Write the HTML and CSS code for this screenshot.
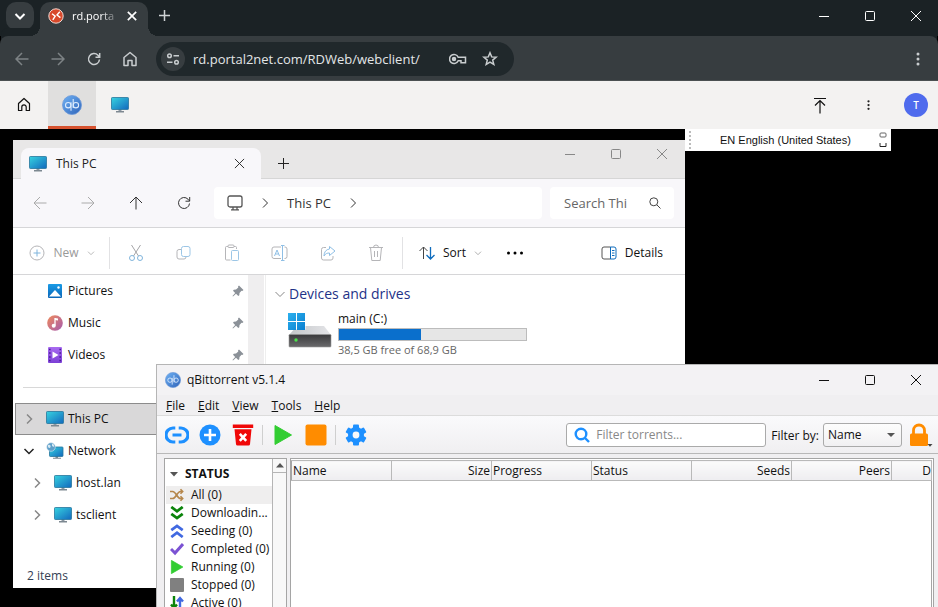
FILE: index.html
```html
<!DOCTYPE html>
<html lang="en">
<head>
<meta charset="utf-8">
<title>rd.portal2net.com</title>
<meta name="viewport" content="width=device-width, initial-scale=1">
<link rel="stylesheet" href="styles.css">
</head>
<body>
<svg class="defs" aria-hidden="true">
  <defs>
    <linearGradient id="g-screen" x1="0" y1="0" x2="1" y2="1"><stop offset="0" stop-color="#37d3e0"/><stop offset="1" stop-color="#1268bd"/></linearGradient>
    <linearGradient id="g-qb" x1="0" y1="0" x2="1" y2="1"><stop offset="0" stop-color="#6fb2f5"/><stop offset="1" stop-color="#2f63b8"/></linearGradient>
    <linearGradient id="g-music" x1="0" y1="0" x2="1" y2="1"><stop offset="0" stop-color="#f08a5a"/><stop offset="1" stop-color="#a55bb0"/></linearGradient>
    <linearGradient id="g-video" x1="0" y1="0" x2="0" y2="1"><stop offset="0" stop-color="#a86bf0"/><stop offset="1" stop-color="#7c3fd6"/></linearGradient>
    <linearGradient id="g-pic" x1="0" y1="0" x2="0" y2="1"><stop offset="0" stop-color="#1a9be6"/><stop offset="1" stop-color="#0b66b8"/></linearGradient>
    <linearGradient id="g-win" x1="0" y1="0" x2="1" y2="1"><stop offset="0" stop-color="#2bb0ee"/><stop offset="1" stop-color="#0a7fd0"/></linearGradient>
    <linearGradient id="g-drive" x1="0" y1="0" x2="0" y2="1"><stop offset="0" stop-color="#3a3a3c"/><stop offset="1" stop-color="#6a6a6c"/></linearGradient>
    <linearGradient id="g-top" x1="0" y1="0" x2="1" y2="0"><stop offset="0" stop-color="#c4c6c9"/><stop offset="1" stop-color="#e4e5e8"/></linearGradient>
  </defs>
  <symbol id="pc" viewBox="0 0 18 16"><path d="M7.500 12h3v2.500h-3z" fill="#8d99a3"/><path d="M5 14h8v1.500H5z" fill="#7d8891"/><rect x="0.500" y="0.500" width="17" height="12" rx="0.800" fill="url(#g-screen)" stroke="#27769c" stroke-width="0.800"/></symbol>
  <symbol id="qb" viewBox="0 0 20 20"><circle cx="10" cy="10" r="9.500" fill="url(#g-qb)" stroke="#6a97d8" stroke-width="0.800"/><g fill="none" stroke="#dcebfd" stroke-width="1.100"><circle cx="6.200" cy="10.200" r="2.700"/><path d="M9 7.300v8.500"/></g><g fill="none" stroke="#dcebfd" stroke-width="1.100"><path d="M11.200 4v9"/><circle cx="13.900" cy="10.200" r="2.700"/></g></symbol>
  <symbol id="close" viewBox="0 0 12 12"><path d="M1 1l10 10M11 1L1 11" fill="none" stroke="currentColor"/></symbol>
  <symbol id="max" viewBox="0 0 12 12"><rect x="1.500" y="1.500" width="9" height="9" rx="1" fill="none" stroke="currentColor"/></symbol>
  <symbol id="min" viewBox="0 0 12 12"><path d="M1 6.500h10" fill="none" stroke="currentColor"/></symbol>
  <symbol id="plus" viewBox="0 0 12 12"><path d="M0 5.500h11M5.500 0v11" fill="none" stroke="currentColor"/></symbol>
  <symbol id="left" viewBox="0 0 14 14"><path d="M13.500 7H1M7 1L1 7l6 6" fill="none" stroke="currentColor"/></symbol>
  <symbol id="right" viewBox="0 0 14 14"><path d="M.5 7H13M7 1l6 6-6 6" fill="none" stroke="currentColor"/></symbol>
  <symbol id="up" viewBox="0 0 14 14"><path d="M7 13.500V1M1 7l6-6 6 6" fill="none" stroke="currentColor"/></symbol>
  <symbol id="chev" viewBox="0 0 12 12"><path d="M4 1.500L8.500 6 4 10.500" fill="none" stroke="currentColor"/></symbol>
  <symbol id="chevd" viewBox="0 0 12 12"><path d="M1.500 4L6 8.500 10.500 4" fill="none" stroke="currentColor"/></symbol>
  <symbol id="home" viewBox="0 0 14 16"><path d="M1 6.500L7 1.500l6 5V14.500H9V9.500H5v5H1z" fill="none" stroke="currentColor" stroke-linejoin="round"/></symbol>
  <symbol id="reload" viewBox="0 0 14 14"><path d="M12.500 7.500A5.500 5.500 0 1 1 11 3.200L12.700 5M12.700 1v4.200H8.500" fill="none" stroke="currentColor"/></symbol>
  <symbol id="dots" viewBox="0 0 4 16"><circle cx="2" cy="3" r="1.500" fill="currentColor"/><circle cx="2" cy="8" r="1.500" fill="currentColor"/><circle cx="2" cy="13" r="1.500" fill="currentColor"/></symbol>
  <symbol id="pin" viewBox="0 0 12 12"><path d="M7 .5L11.500 5 10.300 6 9.500 5.700 7.500 8l-.2 2.300-1 .8L4 8.800 1 11.500.5 11l2.700-3L1 5.800l.8-1L4 4.600 6.300 2.500 6 1.500z" fill="#8b9198"/></symbol>
  <symbol id="play" viewBox="0 0 18 20"><path d="M1 0.500L17.500 10 1 19.500z" fill="#32cd32" stroke="#32cd32" stroke-linejoin="round"/></symbol>
</svg>

<header class="tabstrip">
  <button class="tabsearch" aria-label="Search tabs"><svg width="12" height="12" class="s2"><use href="#chevd"/></svg></button>
  <div class="tab">
    <svg width="16" height="16" viewBox="0 0 16 16"><circle cx="8" cy="8" r="7.200" fill="#d8492b" stroke="#f3d9d2" stroke-width="1"/><path d="M4 5.800l3.200 2.400-2.400 3.600M11.800 3.800L9 7l3.400 2.600" fill="none" stroke="#fff" stroke-width="1.400"/></svg>
    <span class="tabname">rd.porta</span>
    <button aria-label="Close tab"><svg width="10" height="10" class="s2"><use href="#close"/></svg></button>
  </div>
  <button class="newtab" aria-label="New tab"><svg width="12" height="12" class="s15"><use href="#plus"/></svg></button>
  <div class="wincontrols">
    <button aria-label="Minimize"><svg width="12" height="12"><use href="#min"/></svg></button>
    <button aria-label="Maximize"><svg width="12" height="12"><use href="#max"/></svg></button>
    <button aria-label="Close"><svg width="12" height="12"><use href="#close"/></svg></button>
  </div>
</header>

<nav class="toolbar">
  <button class="dim" aria-label="Back"><svg width="14" height="14" class="s15"><use href="#left"/></svg></button>
  <button class="dim" aria-label="Forward"><svg width="14" height="14" class="s15"><use href="#right"/></svg></button>
  <button aria-label="Reload"><svg width="14" height="14" class="s15"><use href="#reload"/></svg></button>
  <button aria-label="Home"><svg width="14" height="16" class="s15"><use href="#home"/></svg></button>
  <div class="omnibox">
    <button class="siteinfo" aria-label="Site information"><svg width="14" height="12" viewBox="0 0 14 12" fill="none" stroke="currentColor" stroke-width="1.500"><circle cx="3.500" cy="2.800" r="1.800"/><path d="M7.500 2.800H13M1 9.200h5.500"/><circle cx="10.500" cy="9.200" r="1.800"/></svg></button>
    <input class="url" aria-label="Address" value="rd.portal2net.com/RDWeb/webclient/">
    <button aria-label="Passwords"><svg width="18" height="12" viewBox="0 0 18 12" fill="none" stroke="currentColor" stroke-width="1.500"><path d="M9.200 4.200A4.500 4.500 0 1 0 9.200 7.800H12v2h4.500V4.200z"/><circle cx="5" cy="6" r="1.500" fill="currentColor"/></svg></button>
    <button aria-label="Bookmark"><svg width="16" height="16" viewBox="0 0 16 16" fill="none" stroke="currentColor" stroke-width="1.500"><path d="M8 1.800l1.700 4.100 4.400.3-3.400 2.900 1.100 4.300L8 11.100l-3.800 2.300 1.100-4.300L1.900 6.200l4.400-.3z"/></svg></button>
  </div>
  <button class="menu" aria-label="Menu"><svg width="4" height="16"><use href="#dots"/></svg></button>
</nav>

<nav class="appbar">
  <button aria-label="All resources"><svg width="14" height="16" viewBox="0 0 14 16"><path d="M1.500 6.500L7 1.500l5.500 5V13.500H9.200V10a2.200 2.200 0 0 0-4.400 0v3.500H1.500z" fill="none" stroke="#111" stroke-width="1.200" stroke-linejoin="round"/></svg></button>
  <button class="current" aria-label="qBittorrent"><svg width="20" height="20"><use href="#qb"/></svg></button>
  <button aria-label="This PC"><svg width="18" height="16"><use href="#pc"/></svg></button>
  <span class="grow"></span>
  <button aria-label="Upload"><svg width="14" height="18" viewBox="0 0 14 18"><path d="M1 2.500h12M7 17.500V4.500M2 9.500l5-5 5 5" fill="none" stroke="#111" stroke-width="1.200"/></svg></button>
  <button aria-label="More"><svg width="3" height="12" class="dark"><use href="#dots"/></svg></button>
  <button class="account"><span>T</span></button>
</nav>

<main class="desktop">
  <section class="langbar">
    <span class="grip"></span><span class="lang">EN English (United States)</span>
    <svg width="8" height="18" viewBox="0 0 8 18" fill="none"><rect x="1" y="2" width="6" height="4" rx="1" stroke="#666"/><path d="M1 12v3.500h6V12" stroke="#222"/></svg>
  </section>

  <section class="explorer">
    <div class="ex-title">
      <div class="ex-tab"><svg width="18" height="16"><use href="#pc"/></svg><span>This PC</span><button aria-label="Close tab"><svg width="11" height="11"><use href="#close"/></svg></button></div>
      <button class="ex-new" aria-label="New tab"><svg width="12" height="12"><use href="#plus"/></svg></button>
      <div class="wincontrols">
        <button aria-label="Minimize"><svg width="12" height="12"><use href="#min"/></svg></button>
        <button aria-label="Maximize"><svg width="12" height="12"><use href="#max"/></svg></button>
        <button aria-label="Close"><svg width="12" height="12"><use href="#close"/></svg></button>
      </div>
    </div>
    <div class="ex-nav">
      <button class="dim" aria-label="Back"><svg width="14" height="14"><use href="#left"/></svg></button>
      <button class="dim" aria-label="Forward"><svg width="14" height="14"><use href="#right"/></svg></button>
      <button aria-label="Up"><svg width="14" height="14"><use href="#up"/></svg></button>
      <button aria-label="Refresh"><svg width="14" height="14"><use href="#reload"/></svg></button>
      <div class="crumbs">
        <svg width="16" height="16" viewBox="0 0 16 16" fill="none" stroke="#555" stroke-width="1.300"><rect x="1" y="1" width="14" height="11" rx="2"/><path d="M6 12v2.500M10 12v2.500M4 14.800h8"/></svg>
        <svg width="12" height="12"><use href="#chev"/></svg>
        <a href="#">This PC</a>
        <svg width="12" height="12"><use href="#chev"/></svg>
      </div>
      <label class="ex-search"><input aria-label="Search This PC" placeholder="Search Thi"><svg width="12" height="12" viewBox="0 0 12 12" fill="none" stroke="#444"><circle cx="4.800" cy="4.800" r="4"/><path d="M7.800 7.800L11.500 11.500"/></svg></label>
    </div>
    <div class="ex-cmd">
      <button class="new" disabled><svg width="16" height="16" viewBox="0 0 16 16" fill="none"><circle cx="8" cy="8" r="7" stroke="#b5b5b8"/><path d="M4.500 8h7M8 4.500v7" stroke="#7fb4dc"/></svg>New<svg width="8" height="8"><use href="#chevd"/></svg></button>
      <span class="rule"></span>
      <button class="tool" aria-label="Cut"><svg width="16" height="18" viewBox="0 0 16 18" fill="none"><path d="M3.500 1l7 11M12.500 1l-7 11" stroke="#a5a5a8"/><circle cx="4" cy="14" r="2.500" stroke="#7fb4dc"/><circle cx="12" cy="14" r="2.500" stroke="#7fb4dc"/></svg></button>
      <button class="tool" aria-label="Copy"><svg width="16" height="16" viewBox="0 0 16 16" fill="none"><path d="M5 4.500H3a2 2 0 0 0-2 2V12a2 2 0 0 0 2 2h5a2 2 0 0 0 2-2" stroke="#b5b5b8"/><rect x="5.500" y="1.500" width="8.500" height="10" rx="2" stroke="#9cc6e6"/></svg></button>
      <button class="tool" aria-label="Paste"><svg width="16" height="18" viewBox="0 0 16 18" fill="none"><path d="M4 2.500H2.500a1 1 0 0 0-1 1V15a1 1 0 0 0 1 1h4M10 2.500h1.500a1 1 0 0 1 1 1V5" stroke="#b5b5b8"/><rect x="4" y="1" width="6" height="2.500" rx="1" stroke="#b5b5b8"/><rect x="7.500" y="6.500" width="7" height="10" rx="1" stroke="#9cc6e6"/></svg></button>
      <button class="tool" aria-label="Rename"><svg width="18" height="16" viewBox="0 0 18 16" fill="none"><path d="M10 2H3a2 2 0 0 0-2 2v7.500a2 2 0 0 0 2 2h7M13.500 2H14a2 2 0 0 1 2 2v7.500a2 2 0 0 1-2 2h-.5" stroke="#b5b5b8"/><path d="M3.500 11L6 5l2.500 6M4.500 9h3M11.500.5v15M10 .5h3.500M10 15.500h3.500" stroke="#8fbfe5"/></svg></button>
      <button class="tool" aria-label="Share"><svg width="16" height="16" viewBox="0 0 16 16" fill="none"><path d="M6 2.500H3.500a2 2 0 0 0-2 2V13a2 2 0 0 0 2 2H11a2 2 0 0 0 2-2v-2" stroke="#b5b5b8"/><path d="M9.500 1.500L15 6l-5.500 4.500V8C7 8 5.500 8.500 4 11c0-4 2-6.500 5.500-7z" stroke="#8fbfe5" stroke-linejoin="round"/></svg></button>
      <button class="tool" aria-label="Delete"><svg width="16" height="18" viewBox="0 0 16 18" fill="none" stroke="#b5b5b8"><path d="M1 3.500h14M5.500 3.500a2.500 2.500 0 0 1 5 0M2.500 3.500L3.800 16.500h8.400L13.500 3.500M6.500 7v6M9.500 7v6"/></svg></button>
      <span class="rule"></span>
      <button class="sort"><svg width="16" height="14" viewBox="0 0 16 14" fill="none"><path d="M4.500 13V1M.5 5l4-4 4 4" stroke="#444"/><path d="M11.500 1v12M7.500 9l4 4 4-4" stroke="#0f6cbd" stroke-width="1.300"/></svg>Sort<svg width="8" height="8"><use href="#chevd"/></svg></button>
      <button class="more" aria-label="See more"><svg width="18" height="4" viewBox="0 0 18 4"><circle cx="2.500" cy="2" r="1.500"/><circle cx="9" cy="2" r="1.500"/><circle cx="15.500" cy="2" r="1.500"/></svg></button>
      <span class="grow"></span>
      <button class="details"><svg width="16" height="14" viewBox="0 0 16 14" fill="none"><path d="M9.500 1H3a2 2 0 0 0-2 2v8a2 2 0 0 0 2 2h6.500" stroke="#555"/><path d="M9.500 1H13a2 2 0 0 1 2 2v8a2 2 0 0 1-2 2H9.500zM11 4.500h2.500M11 7h2.500M11 9.500h2.500" stroke="#0f6cbd"/></svg>Details</button>
    </div>
    <div class="ex-body">
      <div class="tree">
        <a href="#" class="quick"><svg width="16" height="16" viewBox="0 0 16 16"><rect x="1" y="1" width="14" height="14" rx="1" fill="url(#g-pic)"/><path d="M2 13.500L8 7l6 6.500z" fill="#fff"/><circle cx="11.500" cy="4.500" r="1.200" fill="#fff"/></svg>Pictures<svg width="12" height="12" class="pin"><use href="#pin"/></svg></a>
        <a href="#" class="quick"><svg width="16" height="16" viewBox="0 0 16 16"><circle cx="8" cy="8" r="7.800" fill="url(#g-music)"/><path d="M8 3v7.500" stroke="#fff" stroke-width="1.300"/><path d="M8 3l3 .6v2L8 5z" fill="#fff"/><circle cx="6.700" cy="10.700" r="2" fill="#fff"/></svg>Music<svg width="12" height="12" class="pin"><use href="#pin"/></svg></a>
        <a href="#" class="quick"><svg width="16" height="16" viewBox="0 0 16 16"><rect x="1" width="14" height="16" rx="1" fill="url(#g-video)"/><path d="M5.500 4.500L11.500 8l-6 3.500z" fill="#fff"/><path d="M2 2.500h1.600M2 6h1.600M2 10h1.600M2 13.500h1.600M12.400 2.500H14M12.400 6H14M12.400 10H14M12.400 13.500H14" stroke="#4a1d96" stroke-width="1.600"/></svg>Videos<svg width="12" height="12" class="pin"><use href="#pin"/></svg></a>
        <hr>
        <a href="#" class="sel"><svg width="12" height="12" class="arrow"><use href="#chev"/></svg><svg width="18" height="16"><use href="#pc"/></svg>This PC</a>
        <a href="#"><svg width="12" height="12" class="arrow open"><use href="#chevd"/></svg><svg width="18" height="18" viewBox="0 0 18 18"><path d="M9.500 14h2.500v2H9.500zM7 15.800h8v1H7z" fill="#7d8891"/><rect x="3.500" y="5" width="13.500" height="9.500" rx="0.800" fill="url(#g-screen)" stroke="#27769c" stroke-width="0.800"/><circle cx="5" cy="5" r="4.300" fill="#5f9fc9" stroke="#dbe9f2" stroke-width="0.600"/><path d="M2 3c2-1 3 .5 2.500 2S2.800 6 2 5zM6 1.500c2 .5 2.500 2 2 3.500L6 4z" fill="#d5e8f2"/></svg>Network</a>
        <a href="#" class="child"><svg width="12" height="12" class="arrow"><use href="#chev"/></svg><svg width="18" height="16"><use href="#pc"/></svg>host.lan</a>
        <a href="#" class="child"><svg width="12" height="12" class="arrow"><use href="#chev"/></svg><svg width="18" height="16"><use href="#pc"/></svg>tsclient</a>
        <p class="count">2 items</p>
      </div>
      <div class="track"></div>
      <div class="files">
        <h2><svg width="12" height="12"><use href="#chevd"/></svg>Devices and drives</h2>
        <div class="drive">
          <svg width="44" height="38" viewBox="0 0 44 38"><path d="M9 14h27l7 9H1z" fill="url(#g-top)"/><rect x="1" y="22.500" width="42" height="12.500" rx="0.800" fill="url(#g-drive)" stroke="#999" stroke-width="0.600"/><circle cx="8" cy="28" r="1.700" fill="#4be34b"/><path d="M0 0h17.500v17.500H0z" fill="#fff"/><path d="M0 1h8v8H0zM9 1h8v8H9zM0 10h8v8H0zM9 10h8v8H9z" fill="url(#g-win)"/></svg>
          <div class="info"><span>main (C:)</span><div class="usage"><i></i></div><span class="free">38,5 GB free of 68,9 GB</span></div>
        </div>
      </div>
    </div>
  </section>

  <section class="qbt">
    <div class="qb-title"><svg width="16" height="16"><use href="#qb"/></svg><span>qBittorrent v5.1.4</span>
      <div class="wincontrols">
        <button aria-label="Minimize"><svg width="12" height="12"><use href="#min"/></svg></button>
        <button aria-label="Maximize"><svg width="12" height="12"><use href="#max"/></svg></button>
        <button aria-label="Close"><svg width="12" height="12"><use href="#close"/></svg></button>
      </div>
    </div>
    <div class="qb-menu"><button><u>F</u>ile</button><button><u>E</u>dit</button><button><u>V</u>iew</button><button><u>T</u>ools</button><button><u>H</u>elp</button></div>
    <div class="qb-tools">
      <button aria-label="Add link"><svg width="24" height="18" viewBox="0 0 24 18" fill="none" stroke="#1e90ff" stroke-width="3.200"><path d="M10.300 2H8a6.500 6.500 0 0 0 0 14h2.300M13.700 2H16a6.500 6.500 0 0 1 0 14h-2.300"/><path d="M7.500 9h9" stroke-width="3"/></svg></button>
      <button aria-label="Add torrent"><svg width="22" height="22" viewBox="0 0 22 22"><circle cx="11" cy="11" r="10.500" fill="#1e90ff"/><path d="M5 11h12M11 5v12" stroke="#fff" stroke-width="2.600"/></svg></button>
      <button aria-label="Remove"><svg width="22" height="22" viewBox="0 0 22 22"><path d="M.8.500h20.400v3.500H.8zM2.500 5.200h17L18 20.200a1.500 1.500 0 0 1-1.500 1.300h-11A1.500 1.500 0 0 1 4 20.200z" fill="#f00808"/><path d="M7.800 9.800l6.400 7M14.200 9.800l-6.400 7" stroke="#fff" stroke-width="2.600"/></svg></button>
      <span class="rule"></span>
      <button aria-label="Start"><svg width="18" height="20"><use href="#play"/></svg></button>
      <button aria-label="Stop"><svg width="22" height="22" viewBox="0 0 22 22"><rect x="0.500" y="0.500" width="21" height="21" rx="2" fill="#ff8c00"/></svg></button>
      <span class="rule"></span>
      <button aria-label="Options"><svg width="22" height="22" viewBox="0 0 22 22"><g fill="#1e90ff"><circle cx="11" cy="11" r="8"/><rect x="8" y="0.500" width="6" height="21" rx="1"/><rect x="8" y="0.500" width="6" height="21" rx="1" transform="rotate(60 11 11)"/><rect x="8" y="0.500" width="6" height="21" rx="1" transform="rotate(120 11 11)"/></g><circle cx="11" cy="11" r="3.400" fill="#f8f8fa"/></svg></button>
      <span class="grow"></span>
      <label class="filter"><svg width="16" height="16" viewBox="0 0 16 16" fill="none" stroke="#1e90ff" stroke-width="2.400"><circle cx="7" cy="7" r="5.300"/><path d="M10.500 10.500L15 15"/></svg><input aria-label="Filter torrents" placeholder="Filter torrents..."></label>
      <label class="by" for="by">Filter by:</label>
      <span class="selectbox"><select id="by"><option>Name</option></select><svg width="8" height="4" viewBox="0 0 8 4"><path d="M0 0h8L4 4z" fill="#555"/></svg></span>
      <button class="lock" aria-label="Lock"><svg width="24" height="24" viewBox="0 0 24 24"><path d="M4.500 12V7.500a5.500 5.500 0 0 1 11 0V12" fill="none" stroke="#ff8c00" stroke-width="2.800"/><rect x="1" y="10.500" width="18" height="12.500" rx="1.500" fill="#ff8c00"/><path d="M18.500 21h5L21 23.700z" fill="#444"/></svg></button>
    </div>
    <div class="qb-body">
      <div class="side">
        <div class="cats">
          <h3><svg width="8" height="5" viewBox="0 0 8 5"><path d="M0 0h8L4 4.500z" fill="#555"/></svg>STATUS</h3>
          <a href="#" class="on"><svg width="14" height="14" viewBox="0 0 16 14" fill="none" stroke="#b5864a" stroke-width="1.800"><path d="M0 3h3c4 0 5 8 9 8h2M0 11h3c4 0 5-8 9-8h2M12 .5L14.500 3 12 5.500M12 8.500l2.500 2.500L12 13.500"/></svg>All (0)</a>
          <a href="#"><svg width="14" height="14" viewBox="0 0 14 14" fill="none" stroke="#0b840b" stroke-width="2.800"><path d="M1.300 1L7 5.300 12.700 1M1.300 7.800L7 12.100l5.700-4.300"/></svg>Downloadin...</a>
          <a href="#"><svg width="14" height="14" viewBox="0 0 14 14" fill="none" stroke="#4169e1" stroke-width="2.800"><path d="M1.300 6.200L7 1.900l5.700 4.300M1.300 13L7 8.700l5.700 4.300"/></svg>Seeding (0)</a>
          <a href="#"><svg width="14" height="14" viewBox="0 0 14 14" fill="none" stroke="#7b52d3" stroke-width="3"><path d="M1 7l4 4 8-9"/></svg>Completed (0)</a>
          <a href="#"><svg width="14" height="14"><use href="#play"/></svg>Running (0)</a>
          <a href="#"><svg width="14" height="14" viewBox="0 0 14 14"><rect width="14" height="14" rx="1" fill="#808080"/></svg>Stopped (0)</a>
          <a href="#"><svg width="14" height="14" viewBox="0 0 14 14" fill="none" stroke-width="2.400"><path d="M4 0v12M1 8.500L4 12l3-3.500" stroke="#0b840b"/><path d="M10 14V2M7 5.500L10 2l3 3.500" stroke="#4169e1"/></svg>Active (0)</a>
        </div>
        <div class="scroll"><button aria-label="Scroll up"><svg width="8" height="5" viewBox="0 0 8 5"><path d="M0 4.500h8L4 0z" fill="#555"/></svg></button></div>
      </div>
      <div class="list">
        <table>
          <thead><tr><th>Name</th><th class="r">Size</th><th>Progress</th><th>Status</th><th class="r">Seeds</th><th class="r">Peers</th><th class="r last">D</th></tr></thead>
        </table>
      </div>
    </div>
  </section>
</main>
</body>
</html>
```
FILE: styles.css
```css
* { box-sizing: border-box; }
body {
  margin: 0;
  height: 100vh;
  display: flex;
  flex-direction: column;
  overflow: hidden;
  background: #000;
  color: #111;
  font: 12px/16px "Open Sans", "Noto Sans", sans-serif;
}
button, input, select { font: inherit; color: inherit; background: none; border: 0; padding: 0; margin: 0; outline: 0; }
button { display: flex; align-items: center; justify-content: center; flex: none; }
input { min-width: 0; }
a { color: inherit; text-decoration: none; }
svg { flex: none; display: block; }
.defs { position: absolute; width: 0; height: 0; }
.grow { flex: 1; }
.s2 { stroke-width: 2; }
.s15 { stroke-width: 1.5; }

.wincontrols { display: flex; gap: 2px; margin-left: auto; height: 32px; }
.wincontrols button { width: 44px; }

/* browser frame */
.tabstrip { display: flex; height: 36px; flex: none; background: #1b2225; color: #fff; padding-left: 6px; }
.tabsearch { width: 28px; height: 28px; margin-top: 2px; border-radius: 10px; background: #373d40; }
.tab {
  position: relative;
  display: flex;
  align-items: center;
  gap: 8px;
  width: 108px;
  margin: 2px 0 0 6px;
  padding: 0 8px 6px;
  border-radius: 10px 10px 0 0;
  background: #373d40;
}
.tab::before, .tab::after { content: ""; position: absolute; bottom: 0; width: 10px; height: 10px; }
.tab::before { right: 100%; background: radial-gradient(circle at 0 0, transparent 10px, #373d40 10px); }
.tab::after { left: 100%; background: radial-gradient(circle at 100% 0, transparent 10px, #373d40 10px); }
.tabname { flex: 1; margin-right: -4px; white-space: nowrap; font-size: 11px; line-height: 18px; -webkit-mask-image: linear-gradient(90deg, #000 60%, transparent); mask-image: linear-gradient(90deg, #000 60%, transparent); }
.tab button { width: 16px; }
.newtab { width: 34px; height: 32px; color: #cfd3d5; }
.toolbar { display: flex; align-items: center; height: 45px; flex: none; padding: 1px 2px 0 4px; background: #373d40; color: #c9cdcf; border-bottom: 1px solid #4b5052; border-radius: 8px 8px 0 0; box-shadow: 0 -9px 0 -1px #1b2225; }
.toolbar > button { width: 36px; height: 36px; }
.toolbar .dim { color: #7d8385; }
.omnibox { display: flex; align-items: center; flex: 0 1 358px; height: 34px; margin-left: 8px; padding: 0 8px 0 5px; border-radius: 17px; background: #20282b; }
.omnibox button { width: 32px; height: 32px; }
.omnibox .siteinfo { width: 24px; height: 24px; border-radius: 50%; background: #373d40; }
.url { flex: 1; margin-left: 8px; font-size: 13px; color: #e3e6e7; }
.toolbar .menu { margin-left: auto; }

/* web client bar */
.appbar { display: flex; height: 48px; flex: none; background: #f3f2f1; }
.appbar button { width: 48px; color: #222; }
.appbar .current { background: #e0dfde; border-bottom: 3px solid #d6522f; padding-top: 3px; }
.appbar .account { width: auto; padding: 0 10px 0 12px; }
.account span { width: 24px; border-radius: 50%; background: #4f6bed; color: #fff; font-size: 10px; line-height: 24px; font-weight: 600; }

.desktop { position: relative; flex: 1; overflow: hidden; background: #000; }
.langbar { position: absolute; left: 685px; top: 0; display: flex; align-items: center; width: 206px; height: 22px; background: #fff; padding: 0 4px; font: 11px/16px "Liberation Sans", sans-serif; white-space: nowrap; z-index: 2; }
.grip { width: 31px; height: 18px; background: repeating-linear-gradient(#bbb 0 2px, #fff 2px 4px) 0 0 / 2px 18px no-repeat; }
.lang { flex: 1; }

/* file explorer */
.explorer { position: absolute; left: 13px; top: 11px; width: 672px; height: 448px; display: flex; flex-direction: column; background: #fff; }
.ex-title { display: flex; height: 39px; flex: none; padding: 0 1px 0 8px; background: #e8e7e7; box-shadow: inset 0 -1px #d6d6d6; color: #222; }
.ex-tab { display: flex; align-items: center; width: 240px; margin-top: 8px; padding: 0 12px 0 8px; border-radius: 8px 8px 0 0; background: #f8f7fa; }
.ex-tab span { flex: 1; margin-left: 9px; }
.ex-tab button { width: 20px; height: 20px; }
.ex-new { width: 46px; padding-top: 8px; }
.ex-title .wincontrols { color: #888; height: 28px; }
.ex-nav { display: flex; align-items: center; height: 49px; flex: none; padding: 0 11px 0 3px; background: #f8f7fa; border-bottom: 1px solid #d6d6d8; color: #333; }
.ex-nav > button { width: 48px; height: 32px; }
.ex-nav .dim { color: #aaa; }
.crumbs { display: flex; align-items: center; gap: 16px; flex: 1; height: 32px; margin-left: 6px; padding-left: 13px; border-radius: 4px; background: #fff; font-size: 13px; }
.ex-search { display: flex; align-items: center; width: 124px; height: 32px; margin-left: 8px; padding: 0 13px 0 14px; border-radius: 4px; background: #fff; font-size: 13px; }
.ex-search input { flex: 1; width: 0; }
.ex-search input::placeholder { color: #666; opacity: 1; }
.ex-cmd { display: flex; align-items: center; height: 47px; flex: none; padding: 3px 22px 0 18px; border-bottom: 1px solid #d6d6d8; }
.ex-cmd button { gap: 8px; height: 32px; }
.ex-cmd .new { color: #999; width: 62px; white-space: nowrap; }
.ex-cmd .rule { height: 32px; width: 1px; margin: 0 2px 0 16px; background: #e2e2e4; }
.ex-cmd .tool { width: 48px; }
.ex-cmd .tool + .rule { margin: 0 16px 0 2px; }
.ex-cmd .sort svg:last-child { color: #888; }
.ex-cmd .more { width: 66px; }
.ex-body { display: flex; flex: 1; min-height: 0; }
.tree { display: flex; flex-direction: column; width: 235px; padding-left: 2px; }
.tree a { display: flex; align-items: center; gap: 4px; height: 32px; flex: none; padding-left: 7px; border: 1px solid transparent; }
.tree .quick { gap: 5px; padding-left: 31px; }
.tree .child { padding-left: 15px; }
.tree .arrow { color: #888; margin-right: 7px; stroke-width: 1.5; }
.tree .open { color: #222; }
.tree .pin { margin: 0 3px 0 auto; }
.tree hr { width: calc(100% - 8px); margin: 16px 0 15px 8px; border: 0; border-top: 1px solid #d8d8d8; flex: none; }
.tree .sel { background: #d9d8d9; border-color: #8c8c8c; }
.count { margin: auto 0 4px 12px; color: #334155; }
.track { width: 16px; background: #efeeef; }
.files { flex: 1; margin-left: 1px; padding: 9px 8px; border-left: 1px solid #eee; }
.files h2 { display: flex; align-items: center; gap: 3px; margin: 0; font-size: 14px; line-height: 20px; font-weight: 400; color: #1e3287; }
.files h2 svg { color: #888; }
.drive { display: flex; gap: 6px; margin: 7px 0 0 14px; }
.drive > svg { margin-top: 1px; }
.info { display: flex; flex-direction: column; flex: 0 1 189px; line-height: 16px; }
.usage { height: 13px; margin: 1px 0; border: 1px solid #bcbcbc; background: #e6e6e6; }
.usage i { display: block; width: 44%; height: 100%; background: #0a6fcc; }
.free { font-size: 11px; color: #666; }

/* torrent client */
.qbt { position: absolute; left: 156px; right: 0; top: 235px; bottom: 0; display: flex; flex-direction: column; border: solid #b5b5b5; border-width: 1px 0 0 1px; background: #f0eff1; }
.qb-title { display: flex; align-items: center; height: 30px; flex: none; padding-left: 8px; background: #f3f2f4; }
.qb-title span { margin-left: 6px; }
.qb-menu { display: flex; gap: 13px; height: 21px; flex: none; padding: 2px 9px 0; border-bottom: 1px solid #dcdcdc; }
.qb-tools { display: flex; align-items: center; height: 38px; flex: none; padding: 0 3px; background: linear-gradient(#fafafc, #f0eff1); border-bottom: 1px solid #b8b8b8; }
.qb-tools button { width: 33px; height: 32px; }
.qb-tools .rule { width: 1px; height: 20px; margin: 0 3px; background: #cfcfcf; }
.filter { display: flex; align-items: center; gap: 6px; width: 200px; height: 24px; padding: 0 7px; border: 1px solid #aaa; border-radius: 3px; background: #fff; }
.filter input { flex: 1; }
.filter input::placeholder { color: #888; opacity: 1; }
.by { margin: 2px 4px 0 5px; }
.selectbox { position: relative; display: block; }
.selectbox select { appearance: none; display: block; width: 79px; height: 24px; padding: 0 4px; border: 1px solid #aaa; border-radius: 3px; background: linear-gradient(#fdfdfd, #f1f0f2); }
.selectbox svg { position: absolute; right: 7px; top: 10px; pointer-events: none; }
.qb-tools .lock { width: 24px; margin: 0 2px 0 7px; }
.qb-body { display: flex; flex: 1; min-height: 0; gap: 3px; padding: 4px 4px 0 7px; }
.side { display: flex; width: 123px; flex: none; border: 1px solid #a5a5a5; border-bottom: 0; background: #fff; overflow: hidden; }
.cats { flex: 1; min-width: 0; padding: 3px 0 0 1px; }
.cats h3 { display: flex; align-items: center; gap: 7px; margin: 0; height: 24px; padding-left: 4px; font-size: 12px; }
.cats a { display: flex; align-items: center; gap: 7px; height: 18px; padding-left: 4px; white-space: nowrap; }
.cats .on { background: #efeeee; }
.scroll { width: 14px; border-left: 1px solid #b5b5b5; background: #f8f8f8; }
.scroll button { width: 13px; height: 14px; border-bottom: 1px solid #b5b5b5; }
.list { display: flex; align-items: flex-start; flex: 1; min-width: 0; padding: 1px 1px 0 0; border: 1px solid #a5a5a5; border-bottom: 0; background: linear-gradient(#a5a5a5, #a5a5a5) right 1px top 1px / 1px 100% no-repeat #fff; }
table { flex: 1; table-layout: fixed; width: 100%; border-collapse: collapse; border: 1px solid #a5a5a5; }
thead tr { height: 20px; }
th { width: 100px; padding: 0 1px; border: solid #b9b9b9; border-width: 1px 1px 1px 0; background: linear-gradient(#fbfbfb, #eeedf0); font-weight: 400; text-align: left; overflow: hidden; }
th.r { text-align: right; }
th.last { width: auto; padding: 0; }
```
